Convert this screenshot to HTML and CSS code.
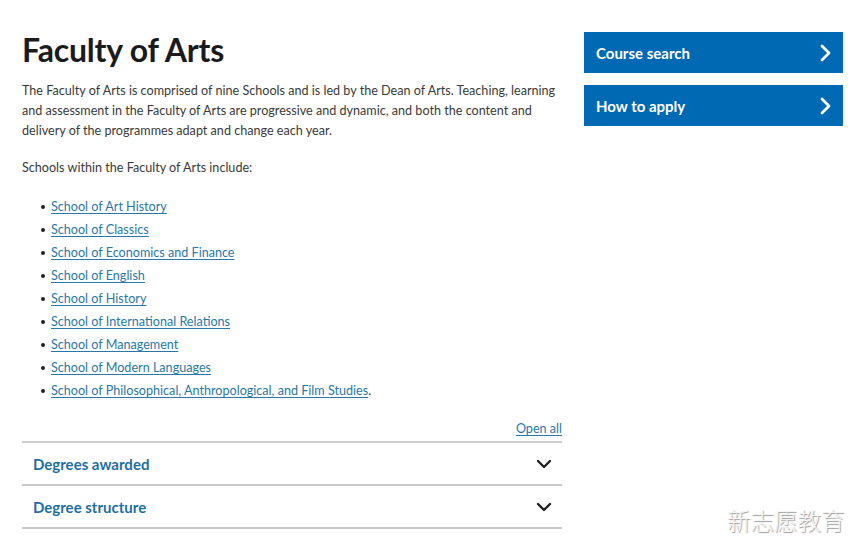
FILE: index.html
```html
<!DOCTYPE html>
<html lang="en">
<head>
<meta charset="utf-8">
<title>Faculty of Arts</title>
<link rel="stylesheet" href="styles.css">
</head>
<body>
<div class="page">
  <main class="main">
    <h1 class="title">Faculty of Arts</h1>
    <p class="intro">The Faculty of Arts is comprised of nine Schools and is led by the Dean of Arts. Teaching, learning and assessment in the Faculty of Arts are progressive and dynamic, and both the content and delivery of the programmes adapt and change each year.</p>
    <p class="intro">Schools within the Faculty of Arts include:</p>
    <ul class="schools">
      <li><a href="#">School of Art History</a></li>
      <li><a href="#">School of Classics</a></li>
      <li><a href="#">School of Economics and Finance</a></li>
      <li><a href="#">School of English</a></li>
      <li><a href="#">School of History</a></li>
      <li><a href="#">School of International Relations</a></li>
      <li><a href="#">School of Management</a></li>
      <li><a href="#">School of Modern Languages</a></li>
      <li><a href="#">School of Philosophical, Anthropological, and Film Studies</a>.</li>
    </ul>
    <div class="openall"><a href="#">Open all</a></div>
    <div class="accordion">
      <div class="acc-item">
        <span class="acc-title">Degrees awarded</span>
        <svg class="acc-icon" width="16" height="10" viewBox="0 0 16 10"><path d="M2 2 L8 8 L14 2" fill="none" stroke="#222" stroke-width="2.4" stroke-linecap="round" stroke-linejoin="round"/></svg>
      </div>
      <div class="acc-item">
        <span class="acc-title">Degree structure</span>
        <svg class="acc-icon" width="16" height="10" viewBox="0 0 16 10"><path d="M2 2 L8 8 L14 2" fill="none" stroke="#222" stroke-width="2.4" stroke-linecap="round" stroke-linejoin="round"/></svg>
      </div>
    </div>
  </main>
  <aside class="side">
    <a class="btn" href="#"><span>Course search</span>
      <svg width="12" height="18" viewBox="0 0 12 18"><path d="M3 2 L10 9 L3 16" fill="none" stroke="#fff" stroke-width="2.8" stroke-linecap="round" stroke-linejoin="round"/></svg></a>
    <a class="btn" href="#"><span>How to apply</span>
      <svg width="12" height="18" viewBox="0 0 12 18"><path d="M3 2 L10 9 L3 16" fill="none" stroke="#fff" stroke-width="2.8" stroke-linecap="round" stroke-linejoin="round"/></svg></a>
  </aside>
</div>
<div class="watermark">新志愿教育</div>
</body>
</html>
```
FILE: styles.css
```css
* { box-sizing: border-box; }
html, body { margin: 0; padding: 0; background: #fff; }
body {
  font-family: "Lato", "Open Sans", sans-serif;
  color: #333;
  width: 858px;
  height: 548px;
  overflow: hidden;
  position: relative;
}
.page {
  display: flex;
  gap: 22px;
  padding: 30px 0 0 22px;
}
.main { width: 540px; }
.title {
  font-size: 32px;
  font-weight: 700;
  color: #1b1b1b;
  margin: 0 0 11px;
  line-height: 40px;
  letter-spacing: -0.2px;
}
.intro {
  font-size: 12.6px;
  line-height: 20px;
  margin: 0 0 17px;
  color: #3a3a3a;
}
.schools {
  list-style: none;
  margin: 16px 0 0;
  padding: 0 0 0 29px;
}
.schools li {
  font-size: 12.6px;
  line-height: 23px;
  position: relative;
  color: #3a3a3a;
}
.schools li::before {
  content: "";
  position: absolute;
  left: -10px;
  top: 10px;
  width: 4px;
  height: 4px;
  border-radius: 50%;
  background: #222;
}
.schools a, .openall a {
  color: #2a78a8;
  text-decoration: underline;
  text-underline-offset: 2px;
}
.openall {
  text-align: right;
  font-size: 12.6px;
  line-height: 20px;
  margin-top: 17px;
}
.accordion {
  margin-top: 2px;
  border-top: 2px solid #cfcfcf;
}
.acc-item {
  display: flex;
  align-items: center;
  justify-content: space-between;
  height: 43px;
  padding: 0 10px 0 11px;
  border-bottom: 2px solid #c9c9c9;
}
.acc-title {
  font-size: 15px;
  font-weight: 700;
  color: #1f6ea3;
}
.side {
  width: 259px;
  display: flex;
  flex-direction: column;
  gap: 12px;
  padding-top: 2px;
}
.btn {
  display: flex;
  align-items: center;
  justify-content: space-between;
  height: 41px;
  padding: 0 12px 0 12px;
  background: #0069b4;
  color: #fff;
  text-decoration: none;
  font-size: 15px;
  font-weight: 700;
}
.watermark {
  position: absolute;
  left: 727px;
  top: 503px;
  font-family: "Noto Sans CJK SC", sans-serif;
  font-size: 23.5px;
  font-weight: 300;
  color: #f4f4f4;
  text-shadow: 1px 1px 1px #9a9a9a;
  letter-spacing: 0;
}
```
